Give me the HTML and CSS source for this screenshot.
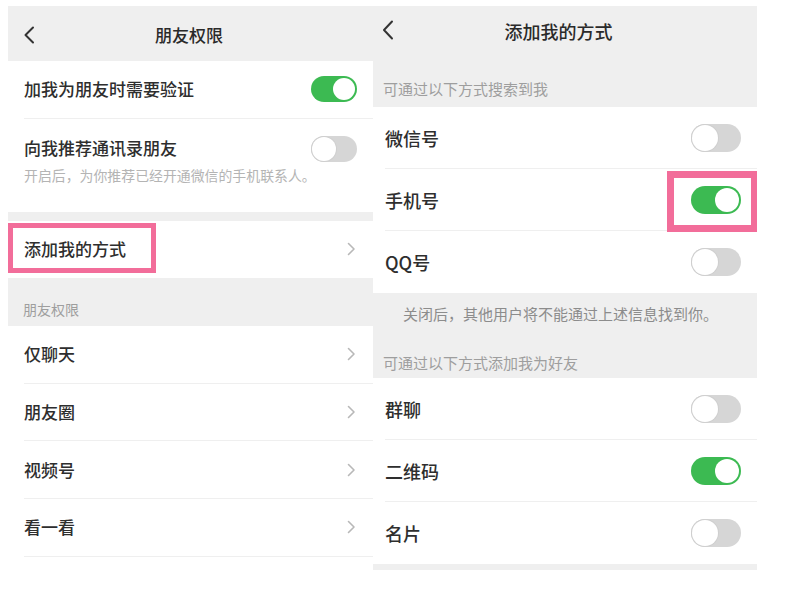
FILE: index.html
```html
<!DOCTYPE html>
<html lang="zh-CN">
<head>
<meta charset="utf-8">
<title>朋友权限</title>
<link rel="stylesheet" href="styles.css">
</head>
<body>
<div class="page">
  <section class="screen screen-left">
    <header class="nav">
      <svg class="back" width="12" height="18" viewBox="0 0 12 18"><polyline points="10,1.5 2.5,9 10,16.5" fill="none" stroke="#333" stroke-width="2" stroke-linecap="round" stroke-linejoin="round"/></svg>
      <h1 class="nav-title">朋友权限</h1>
    </header>
    <div class="group">
      <div class="row"><div class="row-inner"><span class="label">加我为朋友时需要验证</span><span class="toggle on"><i class="knob"></i></span></div></div>
      <div class="row"><div class="row-inner tall">
        <div class="stack"><span class="label">向我推荐通讯录朋友</span><span class="hint">开启后，为你推荐已经开通微信的手机联系人。</span></div>
        <span class="toggle off"><i class="knob"></i></span>
      </div></div>
    </div>
    <div class="gap"></div>
    <div class="group">
      <div class="row marked"><div class="row-inner last"><span class="label">添加我的方式</span><svg class="chev" width="9" height="14" viewBox="0 0 9 14"><polyline points="1.5,1.5 7,7 1.5,12.5" fill="none" stroke="#b8b8b8" stroke-width="1.6" stroke-linecap="round" stroke-linejoin="round"/></svg></div><span class="mark mark-left"></span></div>
    </div>
    <div class="section-title">朋友权限</div>
    <div class="group">
      <div class="row"><div class="row-inner"><span class="label">仅聊天</span><svg class="chev" width="9" height="14" viewBox="0 0 9 14"><polyline points="1.5,1.5 7,7 1.5,12.5" fill="none" stroke="#b8b8b8" stroke-width="1.6" stroke-linecap="round" stroke-linejoin="round"/></svg></div></div>
      <div class="row"><div class="row-inner"><span class="label">朋友圈</span><svg class="chev" width="9" height="14" viewBox="0 0 9 14"><polyline points="1.5,1.5 7,7 1.5,12.5" fill="none" stroke="#b8b8b8" stroke-width="1.6" stroke-linecap="round" stroke-linejoin="round"/></svg></div></div>
      <div class="row"><div class="row-inner"><span class="label">视频号</span><svg class="chev" width="9" height="14" viewBox="0 0 9 14"><polyline points="1.5,1.5 7,7 1.5,12.5" fill="none" stroke="#b8b8b8" stroke-width="1.6" stroke-linecap="round" stroke-linejoin="round"/></svg></div></div>
      <div class="row"><div class="row-inner"><span class="label">看一看</span><svg class="chev" width="9" height="14" viewBox="0 0 9 14"><polyline points="1.5,1.5 7,7 1.5,12.5" fill="none" stroke="#b8b8b8" stroke-width="1.6" stroke-linecap="round" stroke-linejoin="round"/></svg></div></div>
    </div>
  </section>

  <section class="screen screen-right">
    <header class="nav nav-right">
      <svg class="back" width="12" height="20" viewBox="0 0 12 20"><polyline points="10,1.5 2,10 10,18.5" fill="none" stroke="#333" stroke-width="2" stroke-linecap="round" stroke-linejoin="round"/></svg>
      <h1 class="nav-title">添加我的方式</h1>
    </header>
    <div class="section-title r first">可通过以下方式搜索到我</div>
    <div class="group">
      <div class="row r"><div class="row-inner"><span class="label">微信号</span><span class="toggle big off"><i class="knob"></i></span></div></div>
      <div class="row r marked"><div class="row-inner"><span class="label">手机号</span><span class="toggle big on"><i class="knob"></i></span></div><span class="mark mark-right"></span></div>
      <div class="row r"><div class="row-inner last"><span class="label">QQ号</span><span class="toggle big off"><i class="knob"></i></span></div></div>
    </div>
    <div class="note">关闭后，其他用户将不能通过上述信息找到你。</div>
    <div class="section-title r second">可通过以下方式添加我为好友</div>
    <div class="group">
      <div class="row r"><div class="row-inner"><span class="label">群聊</span><span class="toggle big off"><i class="knob"></i></span></div></div>
      <div class="row r"><div class="row-inner"><span class="label">二维码</span><span class="toggle big on"><i class="knob"></i></span></div></div>
      <div class="row r"><div class="row-inner last"><span class="label">名片</span><span class="toggle big off"><i class="knob"></i></span></div></div>
    </div>
    <div class="foot"></div>
  </section>
</div>
</body>
</html>
```

FILE: styles.css
```css
* { box-sizing: border-box; margin: 0; padding: 0; }
html, body { background: #ffffff; }
body {
  font-family: "Noto Sans CJK SC", "Noto Sans", sans-serif;
  color: #2e2e2e;
}
.page {
  display: flex;
  align-items: flex-start;
  padding: 6px 0 0 8px;
}
.screen { display: flex; flex-direction: column; background: #ffffff; }
.screen-left { width: 365px; }
.screen-right { width: 384px; }

.nav {
  height: 55px;
  background: #efefef;
  display: flex;
  align-items: center;
  position: relative;
  padding-left: 15px;
}
.nav .back { display: block; margin-top: 2px; }
.nav-title {
  flex: 1;
  text-align: center;
  font-size: 17px;
  font-weight: 500;
  color: #2a2a2a;
  margin-right: 30px;
  margin-top: 2px;
}
.nav-right { padding-left: 9px; }
.nav-right .back { margin-top: -7px; }
.nav-right .nav-title { font-size: 18px; margin-top: -5px; margin-right: 34px; }

.group { background: #ffffff; }
.row { padding-left: 16px; position: relative; }
.row.r { padding-left: 12px; }
.row-inner {
  height: 57.6px;
  display: flex;
  align-items: center;
  justify-content: space-between;
  padding-right: 16px;
  border-bottom: 1px solid #efefef;
}
.row.r .row-inner { height: 62px; }
.row-inner.last { border-bottom: none; }
.row-inner.tall { height: 93px; border-bottom: none; align-items: flex-start; padding-top: 16px; }
.stack { display: flex; flex-direction: column; min-width: 0; }
.label { font-size: 17px; font-weight: 500; color: #2e2e2e; line-height: 26px; }
.row.r .label { font-size: 18px; }
.hint { font-size: 13.9px; color: #b4b4b4; margin-top: 4px; line-height: 20px; white-space: nowrap; }
.tall .toggle { margin-top: 1px; }
.chev { display: block; margin-right: 1px; }

.gap { height: 9px; background: #efefef; }
.section-title {
  height: 48px;
  background: #efefef;
  font-size: 14px;
  color: #9e9e9e;
  padding-left: 15px;
  padding-top: 21px;
  line-height: 20px;
}
.section-title.r { font-size: 15px; padding-left: 10px; }
.section-title.first { height: 46px; padding-top: 18px; }
.section-title.second { height: 45px; padding-top: 20px; }
.note {
  background: #efefef;
  font-size: 15px;
  color: #8c8c8c;
  padding: 10px 0 0 30px;
  height: 40px;
  line-height: 22px;
}
.foot { height: 6px; background: #efefef; }

.toggle {
  width: 46px;
  height: 26px;
  border-radius: 13px;
  display: flex;
  align-items: center;
  padding: 2px;
  flex: none;
}
.toggle.big { width: 50px; height: 28px; border-radius: 14px; }
.toggle .knob {
  display: block;
  width: 22px;
  height: 22px;
  border-radius: 50%;
  background: #ffffff;
}
.toggle.big .knob { width: 24px; height: 24px; }
.toggle.on { background: #3cba52; justify-content: flex-end; }
.toggle.off { background: #d6d6d6; justify-content: flex-start; padding: 1px; }
.toggle.off .knob { width: 24px; height: 24px; box-shadow: 0 0 0 1px #cfcfcf; }
.toggle.big.off .knob { width: 26px; height: 26px; }

.mark {
  position: absolute;
  border-style: solid;
  border-color: #f26d9a;
  pointer-events: none;
}
.mark-left { left: 0; top: 2px; width: 148px; height: 50px; border-width: 5px; }
.mark-right { right: 0; top: 2px; width: 90px; height: 61px; border-width: 7px 6px 7px 7px; }
```
